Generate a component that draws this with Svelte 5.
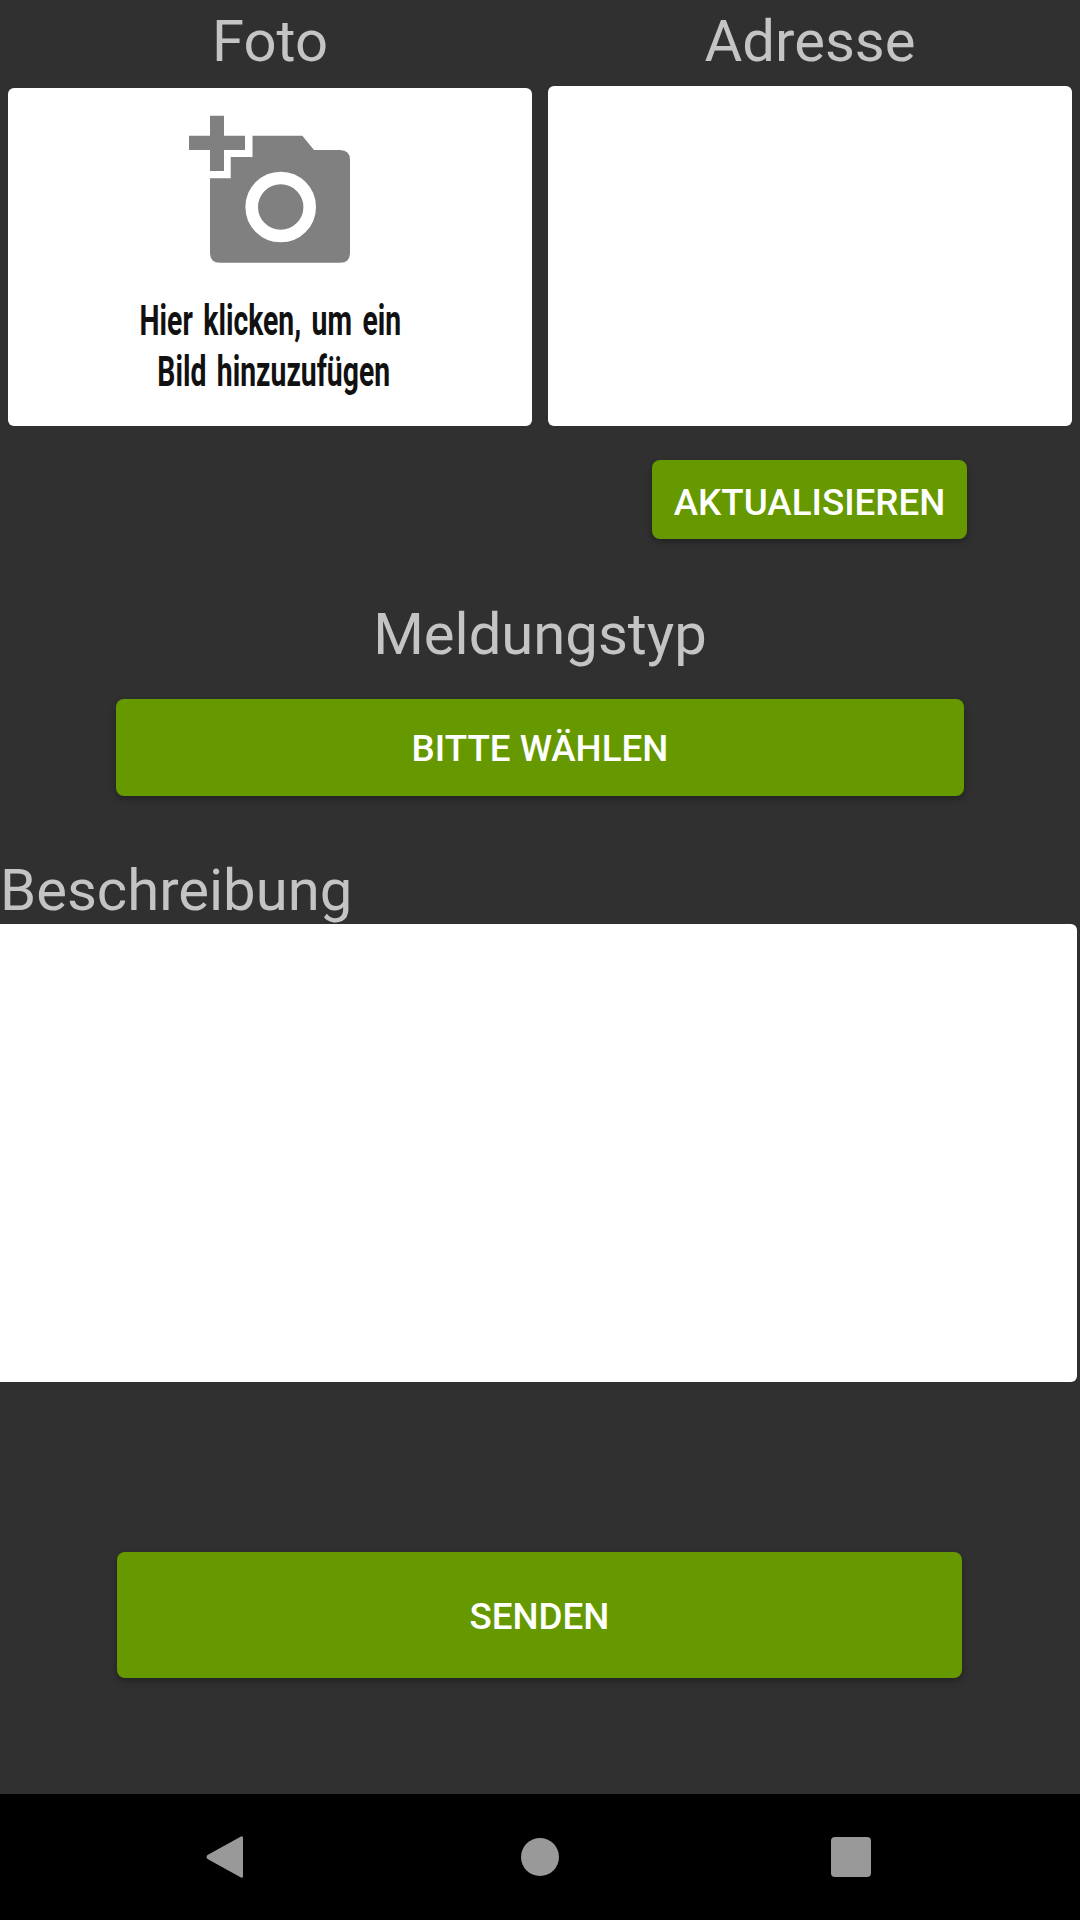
<script>
	const columns = [
		{ title: 'Foto', hasPicture: true },
		{ title: 'Adresse', hasPicture: false }
	];
</script>

<div class="screen">
	<main class="form">
		<section class="top">
			{#each columns as col}
				<div class="col">
					<h2 class="label">{col.title}</h2>
					<div class="card" class:tall={!col.hasPicture}>
						{#if col.hasPicture}
							<svg class="add-photo" viewBox="165 100 210 180" width="210" height="180" aria-hidden="true">
								<path d="M189 135.7h21v-20h14v20h21v14.3h-21v21h-14v-21h-21z" fill="#808080" />
								<path d="M252.5 135.7h49.8L314 150h26q10 0 10 10v92.7q0 10-10 10H220q-10 0-10-10v-74.4h20.7V157h21.8z" fill="#808080" />
								<circle cx="280.7" cy="207" r="29" fill="#808080" stroke="#fff" stroke-width="12.6" />
							</svg>
							<p class="hint"><span class="first">Hier klicken, um ein</span><span>Bild hinzuzufügen</span></p>
						{/if}
					</div>
				</div>
			{/each}
		</section>

		<div class="update-row">
			<button class="btn update">AKTUALISIEREN</button>
		</div>

		<h2 class="label type-label">Meldungstyp</h2>
		<button class="btn choose">BITTE WÄHLEN</button>

		<h2 class="label desc-label">Beschreibung</h2>
		<div class="desc"></div>

		<button class="btn send">SENDEN</button>
	</main>

	<nav class="navbar">
		<svg viewBox="0 0 38 42" width="38" height="42" aria-hidden="true">
			<path d="M35 0.6q2-1 2 1.4v38q0 2.4-2 1.4L1.5 23q-2-2 0-4z" fill="#999" />
		</svg>
		<span class="home"></span>
		<span class="recents"></span>
	</nav>
</div>

<style>
	:global(body) {
		margin: 0;
		background: #303030;
	}

	.screen {
		width: 1080px;
		height: 1920px;
		display: flex;
		flex-direction: column;
		overflow: hidden;
		background: #303030;
		font-family: Roboto, sans-serif;
	}

	.form {
		flex: 1;
		display: flex;
		flex-direction: column;
		align-items: center;
	}

	.top {
		width: 100%;
		box-sizing: border-box;
		padding: 0 8px;
		display: grid;
		grid-template-columns: 1fr 1fr;
		column-gap: 16px;
	}

	.col {
		display: flex;
		flex-direction: column;
		align-items: center;
		justify-content: flex-end;
		height: 426px;
	}

	.label {
		margin: 0;
		font-size: 58px;
		font-weight: 400;
		line-height: 66px;
		color: #c4c4c4;
	}

	.card {
		width: 100%;
		height: 338px;
		box-sizing: border-box;
		padding-top: 12px;
		margin-top: 14px;
		display: flex;
		flex-direction: column;
		align-items: center;
		background: #fff;
		border-radius: 6px;
	}

	.card.tall {
		height: 340px;
		margin-top: 12px;
	}

	.hint {
		margin: 15px 0 0;
		display: flex;
		flex-direction: column;
		align-items: center;
		font-size: 42px;
		font-weight: 700;
		line-height: 51px;
		word-spacing: 5px;
		color: #111;
		white-space: nowrap;
		transform: translateX(4px) scaleX(0.675);
	}

	.hint .first {
		padding-right: 10px;
	}

	.btn {
		display: block;
		padding: 2px 0 0;
		border: none;
		border-radius: 8px;
		background: #669900;
		color: #fff;
		font-family: Roboto, sans-serif;
		font-size: 36.75px;
		font-weight: 500;
		box-shadow: 0 3px 6px rgba(0, 0, 0, 0.3);
	}

	.update-row {
		width: 100%;
		display: flex;
		padding: 34px 0 0 652px;
		box-sizing: border-box;
	}

	.update {
		width: 315px;
		height: 79px;
		padding-top: 5px;
	}

	.type-label {
		margin-top: 62px;
	}

	.choose {
		width: 848px;
		height: 97px;
		margin-top: 32px;
	}

	.desc-label {
		align-self: flex-start;
		margin-top: 61px;
	}

	.desc {
		align-self: flex-start;
		width: 1077px;
		height: 458px;
		margin-top: 1px;
		background: #fff;
		border-radius: 0 6px 6px 0;
	}

	.send {
		width: 845px;
		height: 126px;
		margin-top: 170px;
		margin-left: -1px;
	}

	.navbar {
		height: 126px;
		flex-shrink: 0;
		background: #000;
		display: grid;
		grid-template-columns: 225px 315px 311px;
		justify-content: start;
		align-items: center;
		justify-items: end;
	}

	.home {
		width: 38px;
		height: 38px;
		border-radius: 50%;
		background: #999;
		margin-right: -19px;
	}

	.recents {
		width: 40px;
		height: 40px;
		border-radius: 4px;
		background: #999;
		margin-right: -20px;
	}

	.navbar svg {
		margin-right: -19px;
	}
</style>
